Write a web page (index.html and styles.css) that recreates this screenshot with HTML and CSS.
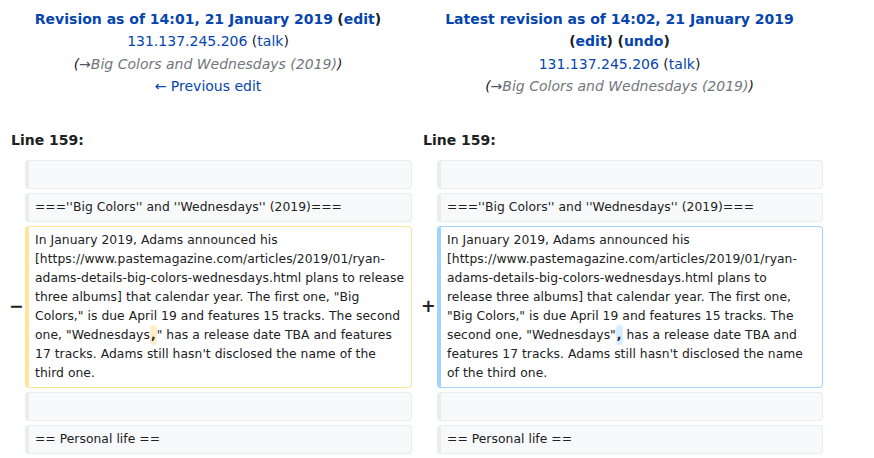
FILE: index.html
```html
<!DOCTYPE html>
<html lang="en">
<head>
<meta charset="utf-8">
<title>Difference between revisions</title>
<link rel="stylesheet" href="styles.css">
</head>
<body>
<table class="diff">
  <colgroup>
    <col class="col-marker-l">
    <col class="col-content-l">
    <col class="col-marker-r">
    <col class="col-content-r">
  </colgroup>
  <tr class="diff-title">
    <td colspan="2" class="diff-otitle">
      <div><strong><a href="#">Revision as of 14:01, 21 January 2019</a></strong> <span class="paren">(<a href="#">edit</a>)</span></div>
      <div><a href="#" class="plain">131.137.245.206</a> <span class="paren-n">(<a href="#" class="plain">talk</a>)</span></div>
      <div class="comment">(<span class="arrow">→</span><span class="autocomment">Big Colors and Wednesdays (2019)</span>)</div>
      <div><a href="#" class="plain">← Previous edit</a></div>
    </td>
    <td colspan="2" class="diff-ntitle">
      <div><strong><a href="#">Latest revision as of 14:02, 21 January 2019</a></strong><br><span class="paren">(<a href="#">edit</a>)</span> <span class="paren">(<a href="#">undo</a>)</span></div>
      <div><a href="#" class="plain">131.137.245.206</a> <span class="paren-n">(<a href="#" class="plain">talk</a>)</span></div>
      <div class="comment">(<span class="arrow">→</span><span class="autocomment">Big Colors and Wednesdays (2019)</span>)</div>
    </td>
  </tr>
  <tr>
    <td colspan="2" class="diff-lineno">Line 159:</td>
    <td colspan="2" class="diff-lineno">Line 159:</td>
  </tr>
  <tr>
    <td class="diff-marker"></td>
    <td class="diff-context"><br></td>
    <td class="diff-marker"></td>
    <td class="diff-context"><br></td>
  </tr>
  <tr>
    <td class="diff-marker"></td>
    <td class="diff-context">===''Big Colors'' and ''Wednesdays'' (2019)===</td>
    <td class="diff-marker"></td>
    <td class="diff-context">===''Big Colors'' and ''Wednesdays'' (2019)===</td>
  </tr>
  <tr>
    <td class="diff-marker">−</td>
    <td class="diff-deletedline">In January 2019, Adams announced his<br>[https://www.pastemagazine.com/articles/2019/01/ryan-<br>adams-details-big-colors-wednesdays.html plans to release<br>three albums] that calendar year. The first one, "Big<br>Colors," is due April 19 and features 15 tracks. The second<br>one, "Wednesdays<del class="diffchange">,</del>" has a release date TBA and features<br>17 tracks. Adams still hasn't disclosed the name of the<br>third one.</td>
    <td class="diff-marker">+</td>
    <td class="diff-addedline">In January 2019, Adams announced his<br>[https://www.pastemagazine.com/articles/2019/01/ryan-<br>adams-details-big-colors-wednesdays.html plans to<br>release three albums] that calendar year. The first one,<br>"Big Colors," is due April 19 and features 15 tracks. The<br>second one, "Wednesdays"<ins class="diffchange">,</ins> has a release date TBA and<br>features 17 tracks. Adams still hasn't disclosed the name<br>of the third one.</td>
  </tr>
  <tr>
    <td class="diff-marker"></td>
    <td class="diff-context"><br></td>
    <td class="diff-marker"></td>
    <td class="diff-context"><br></td>
  </tr>
  <tr>
    <td class="diff-marker"></td>
    <td class="diff-context">== Personal life ==</td>
    <td class="diff-marker"></td>
    <td class="diff-context">== Personal life ==</td>
  </tr>
</table>
</body>
</html>
```

FILE: styles.css
```css
html, body {
  margin: 0;
  padding: 0;
  background: #ffffff;
}

body {
  font-family: "DejaVu Sans", sans-serif;
  font-size: 14px;
  color: #202122;
}

a {
  color: #0645ad;
  text-decoration: none;
}

.diff {
  width: 827px;
  table-layout: fixed;
  border-collapse: separate;
  border-spacing: 4px;
}

.col-marker-l, .col-marker-r { width: 17px; }
.col-content-l { width: 387px; }
.col-content-r { width: 386px; }

.diff td {
  padding: 0;
}

.diff-otitle, .diff-ntitle {
  text-align: center;
  vertical-align: top;
  line-height: 22.4px;
  padding: 4px 7px 3px 7px !important;
}

.diff-otitle strong, .diff-ntitle strong {
  font-weight: bold;
}

.paren {
  font-weight: bold;
  color: #202122;
}

.paren-n {
  color: #202122;
}

.comment {
  font-style: italic;
  color: #202122;
}

.comment .arrow {
  color: #54595d;
}

.comment .autocomment {
  color: #72777d;
}

.diff-lineno {
  font-weight: bold;
  padding: 24px 7px 5px 7px !important;
  line-height: 22.4px;
}

.diff-marker {
  font-weight: bold;
  font-size: 17.5px;
  text-align: center;
  vertical-align: middle;
  padding-left: 5px !important;
  line-height: 1;
}

.diff-context, .diff-deletedline, .diff-addedline {
  font-size: 12.32px;
  letter-spacing: 0.05px;
  line-height: 19px;
  vertical-align: top;
  white-space: pre-wrap;
  word-wrap: break-word;
  border-style: solid;
  border-width: 1px 1px 1px 4px;
  border-radius: 4px;
  padding: 4px 6px !important;
}

.diff-context {
  background: #f8f9fa;
  border-color: #eaecf0;
  color: #202122;
}

.diff-deletedline {
  border-color: #ffe49c;
  background: #ffffff;
}

.diff-addedline {
  border-color: #a3d3ff;
  background: #ffffff;
}

.diffchange {
  text-decoration: none;
  font-weight: bold;
  border-radius: 4px;
  padding: 3px 1px;
}

del.diffchange {
  background: #feeec8;
}

ins.diffchange {
  background: #d8ecff;
}
```
